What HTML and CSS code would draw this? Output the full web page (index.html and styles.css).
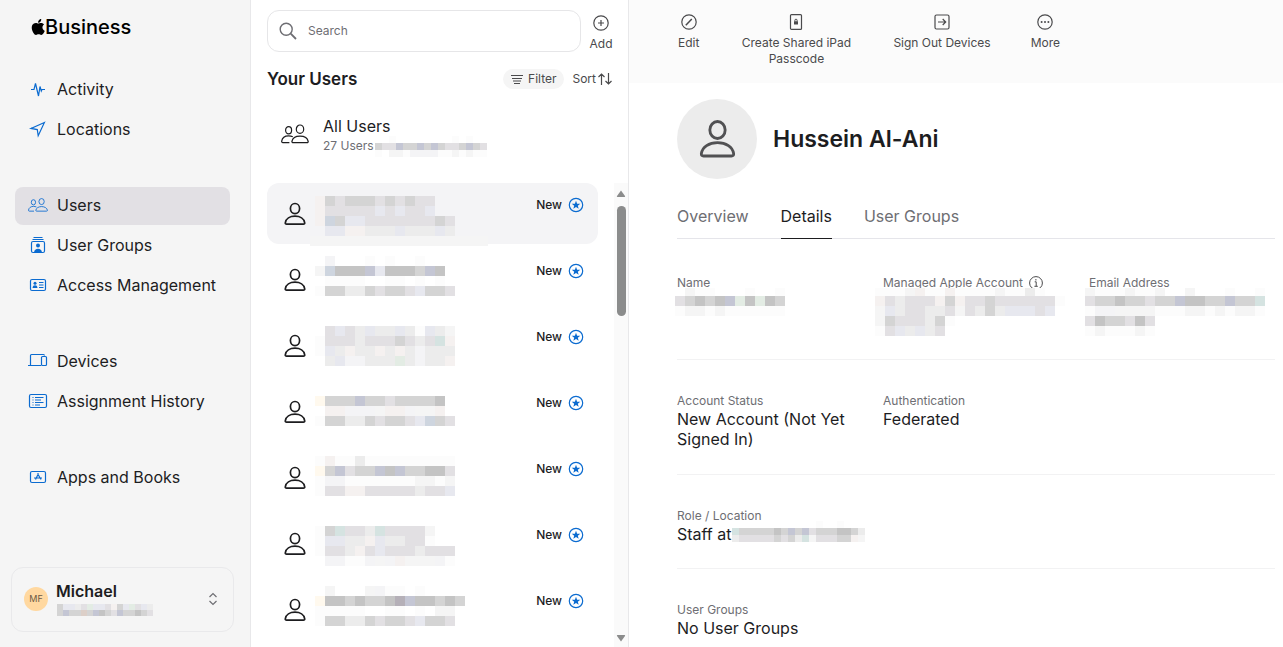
FILE: index.html
```html
<!DOCTYPE html>
<html lang="en">
<head>
<meta charset="utf-8">
<title>Business - Users</title>
<link rel="stylesheet" href="styles.css">
</head>
<body>
<svg class="defs" width="0" height="0" aria-hidden="true">
  <symbol id="person" viewBox="0 0 22 24">
    <ellipse cx="11" cy="6.6" rx="4.6" ry="5.1"/>
    <path d="M2.6 22.2h16.8c1 0 1.4-.6 1.3-1.4-.6-4-4.6-6.600-9.700-6.600s-9.100 2.600-9.700 6.600c-.1.800.3 1.400 1.300 1.400z"/>
  </symbol>
  <symbol id="people" viewBox="0 0 28 20">
    <ellipse cx="19" cy="5.200" rx="3.700" ry="4.200"/>
    <path d="M12.200 18.600h13.800c.9 0 1.300-.5 1.200-1.200-.6-3.200-4-5.200-8.200-5.200s-7.500 2-8.100 5.200c-.1.700.3 1.200 1.300 1.200z"/>
    <ellipse cx="7.600" cy="6.200" rx="3" ry="3.600"/>
    <path d="M11.800 12.800c-1.200-.6-2.600-.9-4.200-.9-3.500 0-6.400 2-6.900 5.300-.1.800.3 1.400 1.100 1.400h6.600"/>
  </symbol>
  <symbol id="star" viewBox="0 0 16 16">
    <circle cx="8" cy="8" r="6.700" fill="none" stroke="#0b6bd0" stroke-width="1.200"/>
    <path fill="#0b6bd0" stroke="none" d="M8 3.700l1.100 3h3.200L9.800 8.700l.9 3.100L8 10l-2.700 1.800.9-3.100-2.500-2h3.200z"/>
  </symbol>
</svg>

<aside class="sidebar">
  <div class="brand">
    <svg class="apple" viewBox="3 1 19 22" width="15" height="18" aria-hidden="true"><path d="M18.700 12.500c0-2.500 2-3.700 2.100-3.800-1.200-1.700-3-1.900-3.600-1.900-1.500-.2-3 .9-3.700.9-.8 0-2-.9-3.200-.9C8.600 6.800 7 7.800 6.100 9.300c-1.800 3.100-.5 7.700 1.300 10.200.9 1.200 1.900 2.600 3.200 2.600 1.300-.1 1.800-.8 3.300-.8s2 .8 3.300.8c1.400 0 2.300-1.200 3.100-2.500 1-1.400 1.400-2.800 1.400-2.900 0 0-3-1.100-3-4.200zM16.200 5.200c.7-.8 1.200-2 1-3.200-1 0-2.200.7-2.900 1.500-.6.700-1.200 1.900-1 3 1.100.1 2.200-.5 2.900-1.300z"/></svg>
    <span>Business</span>
  </div>
  <nav class="nav" aria-label="Main">
    <div class="nav-group">
      <a class="nav-item" href="#activity"><svg class="ni" viewBox="0 0 20 20"><path d="M3 10.500h3l1.500-6 3 12.500 1.500-9.500 1.300 4.500.7-1.500h3"/></svg>Activity</a>
      <a class="nav-item" href="#locations"><svg class="ni" viewBox="0 0 20 20"><path d="M16.400 3.500L3 9.400l6.300 1.200.9 6.200z"/></svg>Locations</a>
    </div>
    <div class="nav-group">
      <a class="nav-item current" href="#users" aria-current="page"><svg class="ni"><use href="#people"/></svg>Users</a>
      <a class="nav-item" href="#groups"><svg class="ni" viewBox="0 0 20 20"><path d="M5.500 2.500h9M4.500 4.500h11"/><rect x="3.500" y="6.500" width="13" height="11" rx="1.500"/><g class="solid"><circle cx="10" cy="10.500" r="2"/><path d="M6 17.500c.3-2.600 1.800-3.700 4-3.700s3.700 1.100 4 3.700z"/></g></svg>User Groups</a>
      <a class="nav-item" href="#access"><svg class="ni" viewBox="0 0 20 20"><rect x="2.500" y="4.500" width="15" height="11" rx="1.500"/><path d="M11 7.500h4.500M11 10h4.500M11 12.500h4.500" stroke-width="1"/><g class="solid"><circle cx="7" cy="8.300" r="1.500"/><path d="M4.500 13c.2-2 1.200-2.700 2.500-2.700s2.300.7 2.500 2.700z"/></g></svg>Access Management</a>
    </div>
    <div class="nav-group">
      <a class="nav-item" href="#devices"><svg class="ni" viewBox="0 0 20 20"><path d="M0 14.500h13M2.500 14.500v-10q0-1 1-1h12q1 0 1 1"/><rect x="13.500" y="5.500" width="5" height="9" rx="1"/></svg>Devices</a>
      <a class="nav-item" href="#history"><svg class="ni" viewBox="0 0 20 20"><rect x="1.500" y="3.500" width="17" height="13" rx="1.500"/><path d="M4.500 6.500h1M7 6.500h8.500M4.500 9h1M7 9h6M4.500 11.500h1M7 11.500h8.500M4.500 14h1M7 14h5" stroke-width="1"/></svg>Assignment History</a>
    </div>
    <div class="nav-group">
      <a class="nav-item" href="#apps"><svg class="ni" viewBox="0 0 20 20"><rect x="2.500" y="4.500" width="15" height="11" rx="1.500"/><path d="M9.500 6.500l3.500 6M10.500 6.500L7.500 12.500M6 11h8"/></svg>Apps and Books</a>
    </div>
  </nav>
  <button class="account" type="button">
    <span class="initials">MF</span>
    <span class="account-text">
      <strong>Michael</strong>
      <svg class="mosaic account-id" data-size="6" data-x="1" data-rows="ehhcdmhhdiehmdhc egeepegfedgeefed"></svg>
    </span>
    <svg class="updown" viewBox="0 0 10 14" width="10" height="14"><path d="M1.500 5L5 1.500 8.500 5M1.500 9L5 12.500 8.500 9"/></svg>
  </button>
</aside>

<section class="list-pane">
  <div class="search-row">
    <label class="search">
      <svg viewBox="0 0 18 18" width="18" height="18"><circle cx="7.200" cy="7.200" r="6"/><path d="M11.700 11.700l5.300 5.300" stroke-width="1.800"/></svg>
      <input type="search" placeholder="Search" aria-label="Search">
    </label>
    <button class="tool add" type="button"><svg viewBox="0 0 16 16"><circle cx="8" cy="8" r="7.200"/><path d="M8 5v6M5 8h6"/></svg>Add</button>
  </div>
  <div class="list-head">
    <h2>Your Users</h2>
    <button class="filter" type="button"><svg viewBox="0 0 12 10" width="12" height="10"><path d="M0 1.500h12M1 4.500h10M2 7h8M3 9.500h6" stroke-width="1"/></svg>Filter</button>
    <button class="sort" type="button">Sort<svg viewBox="0 0 14 12" width="14" height="12"><path d="M3.500 12V1M.5 4l3-3 3 3M10.500 0v11M7.500 8l3 3 3-3"/></svg></button>
  </div>
  <button class="all-users" type="button">
    <svg class="people" width="28" height="20"><use href="#people"/></svg>
    <span class="all-text"><span class="all-title">All Users</span>
      <span class="all-sub">27 Users <svg class="mosaic count-info" data-size="7" data-y="-7" data-rows="..a........a.a.. eddgeegegeddeged a.bbajjjjaababaa"></svg></span>
    </span>
  </button>
  <div class="scroll-area">
    <div class="users">
      <button class="user selected" type="button"><svg class="person"><use href="#person"/></svg><svg class="mosaic info" data-strip="yes" data-y="13" data-rows="iedeeedededd idddddhdhddh ikehhddddddded jhhiiccchccchc"></svg><span class="badge">New<svg><use href="#star"/></svg></span></button>
      <button class="user" type="button"><svg class="person"><use href="#person"/></svg><svg class="mosaic info" data-y="7" data-rows=".j...a.a..a bkfffghfffegf .aaaa..aa.a.a aeeccedeedheed"></svg><span class="badge">New<svg><use href="#star"/></svg></span></button>
      <button class="user" type="button"><svg class="person"><use href="#person"/></svg><svg class="mosaic info" data-y="11" data-rows=".dhdchcchcahcb adddcdddedcdli ahciccicicjccc .chjjcccmcjcci"></svg><span class="badge">New<svg><use href="#star"/></svg></span></button>
      <button class="user" type="button"><svg class="person"><use href="#person"/></svg><svg class="mosaic info" data-y="15" data-rows="neeegeedeeeef .iijjjbiijbbi aeeccedeedhked"></svg><span class="badge">New<svg><use href="#star"/></svg></span></button>
      <button class="user" type="button"><svg class="person"><use href="#person"/></svg><svg class="mosaic info" data-y="9" data-rows="aiaacaaaaaaaaa negdeegfgeeffd ajjaaaaaaabbab addiidddddcddh"></svg><span class="badge">New<svg><use href="#star"/></svg></span></button>
      <button class="user" type="button"><svg class="person"><use href="#person"/></svg><svg class="mosaic info" data-y="13" data-rows="aelddclddddb ahhccihccdda addcidhdddcddd .jjaajbjibbbja"></svg><span class="badge">New<svg><use href="#star"/></svg></span></button>
      <button class="user" type="button"><svg class="person"><use href="#person"/></svg><svg class="mosaic info" data-y="7" data-rows=".b...bjaa.a nffefeefogffefe aaaaa..aa.a.bb aeeccedeedheed"></svg><span class="badge">New<svg><use href="#star"/></svg></span></button>
    </div>
    <div class="scrollbar" aria-hidden="true">
      <svg viewBox="0 0 10 8" width="10" height="8"><path d="M5 0.500L9 6q.6 1-.6 1H1.600Q.4 7 1 6z"/></svg>
      <span class="thumb"></span>
      <svg viewBox="0 0 10 8" width="10" height="8"><path d="M5 7.500L9 2q.6-1-.6-1H1.600Q.4 1 1 2z"/></svg>
    </div>
  </div>
</section>

<main class="detail">
  <div class="toolbar">
    <button class="tool" type="button"><svg viewBox="0 0 16 16"><circle cx="8" cy="8" r="7.200"/><path d="M4.800 11.300l6-6.200" stroke-width="1.500"/></svg>Edit</button>
    <button class="tool wide" type="button"><svg viewBox="0 0 16 16"><rect x="2.500" y=".6" width="11" height="14.800" rx="1"/><path d="M6.900 7.500V6.300a1.100 1.100 0 0 1 2.200 0v1.200" stroke-width="1"/><rect class="lock" x="6" y="7.200" width="4" height="3.400" rx=".4"/></svg>Create Shared iPad Passcode</button>
    <button class="tool" type="button"><svg viewBox="0 0 16 16"><rect x="1" y="1" width="14" height="14" rx="1.500"/><path d="M4 8h7.500M8.700 5l3 3-3 3"/></svg>Sign Out Devices</button>
    <button class="tool" type="button"><svg viewBox="0 0 16 16"><circle cx="8" cy="8" r="7.200"/><g class="lock"><circle cx="4.600" cy="8" r="1"/><circle cx="8" cy="8" r="1"/><circle cx="11.400" cy="8" r="1"/></g></svg>More</button>
  </div>
  <div class="content">
    <header class="profile">
      <span class="avatar"><svg width="37" height="40"><use href="#person"/></svg></span>
      <h1>Hussein Al-Ani</h1>
    </header>
    <nav class="tabs" aria-label="User sections">
      <a href="#overview">Overview</a>
      <a class="active" href="#details" aria-current="page">Details</a>
      <a href="#user-groups">User Groups</a>
    </nav>
    <dl class="fields first">
      <div><dt>Name</dt><dd><svg class="mosaic" data-x="-2" data-rows=".baa...a..a defefgmfmfe abbabaaaaaa"></svg></dd></div>
      <div><dt>Managed Apple Account <svg class="info-icon" viewBox="0 0 14 14" width="14" height="14"><circle cx="7" cy="7" r="6.400"/><path d="M5.700 5.800h1.500v4.400M5.400 10.300h3.400M6.900 3v1.500"/></svg></dt><dd><svg class="mosaic" data-x="-8" data-rows="aaabiaaiaaaabaaca idcdddieiddedddddda bhcddccdbdcechhhdh bedddcea adhchcd"></svg></dd></div>
      <div><dt>Email Address</dt><dd><svg class="mosaic" data-x="-4" data-rows="baaabaab..b...a..a deefeedeegffeegeel ajjbbbbaaabbababba dfeedfd abaaaba"></svg></dd></div>
    </dl>
    <dl class="fields status">
      <div><dt>Account Status</dt><dd>New Account (Not Yet Signed In)</dd></div>
      <div><dt>Authentication</dt><dd>Federated</dd></div>
    </dl>
    <dl class="fields">
      <div><dt>Role / Location</dt><dd class="staff">Staff at<svg class="mosaic place" data-size="7" data-y="-3" data-rows="............a..a leeeeefegegdeeeffec cdddddedeclbdddeeib"></svg></dd></div>
    </dl>
    <dl class="fields">
      <div><dt>User Groups</dt><dd>No User Groups</dd></div>
    </dl>
  </div>
</main>
<script src="mosaic.js"></script>
</body>
</html>
```
FILE: styles.css
```css
* { box-sizing: border-box; }

body {
  margin: 0;
  display: flex;
  height: 100vh;
  overflow: hidden;
  background: #fff;
  color: #1d1d1f;
  font: 16px/20px Inter, "Liberation Sans", sans-serif;
}

button, input { font: inherit; color: inherit; }
button { border: 0; padding: 0; background: none; text-align: left; cursor: pointer; }
a { color: inherit; text-decoration: none; }
h1, h2, dl, dd { margin: 0; }
svg { fill: none; stroke: currentColor; stroke-width: 1.2; flex: none; }
.defs { position: absolute; }
.mosaic { display: block; width: 150px; height: 20px; overflow: visible; stroke: none; }

/* Sidebar */
.sidebar {
  display: flex;
  flex-direction: column;
  flex: none;
  width: 251px;
  padding: 15px;
  background: #f5f5f5;
  border-right: 1px solid #e8e8ea;
}
.brand {
  display: flex;
  align-items: center;
  padding-left: 15px;
  height: 24px;
  color: #000;
  font-size: 20px;
  font-weight: 500;
}
.apple { fill: currentColor; stroke: none; }
.nav { display: flex; flex-direction: column; gap: 38px; margin-top: 32px; flex: 1; }
.nav-group { display: flex; flex-direction: column; gap: 2px; }
.nav-item {
  display: flex;
  align-items: center;
  gap: 9px;
  width: 215px;
  height: 38px;
  padding: 0 0 2px 13px;
  border-radius: 8px;
}
.nav-item.current { background: #e2e0e4; }
.ni { width: 20px; height: 20px; color: #0b6bd0; stroke-width: 1.2; }
.solid { fill: currentColor; stroke: none; }
.account {
  display: flex;
  align-items: center;
  gap: 8px;
  height: 65px;
  margin: 0 1px 0 -4px;
  padding: 0 15px 2px 12px;
  border: 1px solid #e9e9eb;
  border-radius: 12px;
}
.initials {
  display: grid;
  place-items: center;
  width: 24px;
  height: 24px;
  border-radius: 50%;
  background: #ffd8a0;
  color: #6b5a45;
  font-size: 9px;
}
.account-text { flex: 1; }
.account-text strong { display: block; font-weight: 600; line-height: 20px; }
.account-id { width: 96px; height: 12px; margin-top: 3px; }
.updown { color: #6e6e73; }

/* User list */
.list-pane {
  display: flex;
  flex-direction: column;
  flex: none;
  width: 378px;
  padding: 10px 0 0 16px;
  border-right: 1px solid #e8e8ea;
}
.search-row { display: flex; gap: 8px; padding-right: 15px; }
.search {
  display: flex;
  align-items: center;
  flex: 1;
  gap: 11px;
  height: 42px;
  padding: 0 11px;
  border: 1px solid #e6e6e8;
  border-radius: 12px;
  color: #6e6e73;
}
.search svg { stroke-width: 1.4; }
.search input {
  flex: 1;
  min-width: 0;
  padding: 0;
  border: 0;
  outline: 0;
  background: none;
  font-size: 12px;
}
.search input::placeholder { color: #6e6e73; }
.tool {
  display: flex;
  flex-direction: column;
  align-items: center;
  gap: 5px;
  color: #4a4a4c;
  font-size: 12px;
  line-height: 16px;
  text-align: center;
}
.tool svg { width: 16px; height: 16px; }
.lock { fill: currentColor; stroke: none; }
.add { width: 24px; padding-top: 5px; }
.list-head { display: flex; align-items: center; gap: 8px; height: 20px; margin-top: 17px; padding-right: 16px; }
.list-head h2 { flex: 1; font-size: 17px; font-weight: 600; }
.filter, .sort { display: flex; align-items: center; height: 20px; color: #4a4a4c; font-size: 12px; }
.filter { gap: 5px; padding: 0 8px; border-radius: 10px; background: #f5f5f5; }
.sort { gap: 2px; }
.all-users { display: flex; align-items: center; gap: 14px; height: 94px; padding-left: 14px; }
.people { margin-bottom: 4px; }
.all-text { display: flex; flex-direction: column; }
.all-sub { display: flex; align-items: center; gap: 1px; color: #6e6e73; font-size: 12px; }
.count-info { width: 112px; height: 7px; }
.scroll-area { display: flex; justify-content: space-between; flex: 1; min-height: 0; overflow: hidden; }
.users { display: flex; flex-direction: column; gap: 5px; width: 331px; }
.user {
  display: flex;
  flex: none;
  width: 100%;
  height: 61px;
  padding: 0 14px 0 17px;
  border-radius: 12px;
}
.user.selected { background: #f4f4f6; }
.person { width: 22px; height: 24px; margin-top: 19px; stroke-width: 1.7; }
.info { height: 61px; margin-left: 9px; }
.badge {
  display: flex;
  align-items: center;
  gap: 6px;
  height: 20px;
  margin: 12px 0 0 auto;
  font-size: 12px;
  font-weight: 500;
}
.badge svg { width: 16px; height: 16px; }
.scrollbar {
  display: flex;
  flex-direction: column;
  align-items: center;
  gap: 8px;
  width: 14px;
  padding: 7px 0 5px;
  background: #fafafa;
  color: #8b8c8c;
}
.scrollbar svg { fill: currentColor; stroke: none; }
.scrollbar svg:last-child { margin-top: auto; }
.thumb { width: 9px; height: 110px; border-radius: 5px; background: currentColor; }

/* Detail */
.detail { flex: 1; min-width: 0; }
.toolbar { display: flex; align-items: flex-start; gap: 40px; height: 83px; padding: 14px 0 0 49px; background: #fbfbfb; }
.wide { width: 114px; }
.content { padding: 16px 8px 0 48px; }
.profile { display: flex; align-items: center; gap: 16px; }
.profile h1 { font-size: 23px; font-weight: 600; line-height: 30px; }
.avatar { display: grid; place-items: center; width: 80px; height: 80px; border-radius: 50%; background: #ececec; color: #515153; }
.avatar svg { stroke-width: 1.7; }
.tabs { display: flex; gap: 32px; margin-top: 27px; border-bottom: 1px solid #e5e5ea; color: #6e6e73; }
.tabs a { margin-bottom: -1px; padding-bottom: 13px; }
.tabs .active { border-bottom: 1px solid #1d1d1f; padding-bottom: 12px; color: #1d1d1f; }
.fields {
  display: grid;
  grid-template-columns: repeat(3, 1fr);
  gap: 20px;
  padding: 33px 0 24px;
  border-bottom: 1px solid #f2f2f3;
}
.fields.first { padding-top: 36px; }
.fields.first dd { display: flex; height: 44px; }
.fields.first .mosaic { height: 50px; margin-top: -5px; clip-path: inset(2px -60px 0 -10px); }
.fields.status { padding-bottom: 25px; }
.fields:last-child { border: 0; }
dt { display: flex; align-items: center; gap: 6px; height: 16px; color: #6e6e73; font-size: 12px; line-height: 16px; white-space: nowrap; }
.info-icon { color: #4a4a4c; stroke-width: 1; }
.staff { display: flex; white-space: nowrap; }
```
FILE: mosaic.js
```javascript
// Draws redacted text as a grid of tiles. Each letter is one tile colour, a dot is an empty tile.
const tones = {
  a: "#fcfcfc", b: "#f5f5f5", c: "#ececec", d: "#e2e0e3", e: "#d4d4d4",
  f: "#c4c4c4", g: "#c4c6d4", h: "#e7e8ef", i: "#f5f1f0", j: "#f4f4f6",
  k: "#ced5df", l: "#d5e3e1", m: "#e3ece4", n: "#fff9ee", o: "#b5b0b8", p: "#dccfc8"
};

function tile(svg, x, y, width, height, fill) {
  const rect = document.createElementNS("http://www.w3.org/2000/svg", "rect");
  Object.entries({ x, y, width, height, fill }).forEach(([key, value]) => rect.setAttribute(key, value));
  svg.append(rect);
}

document.querySelectorAll(".mosaic").forEach((svg) => {
  const size = Number(svg.dataset.size || 10);
  const left = Number(svg.dataset.x || 0);
  const top = Number(svg.dataset.y || 0);
  svg.dataset.rows.split(" ").forEach((row, r) => {
    [...row].forEach((tone, c) => {
      if (tone !== ".") tile(svg, left + c * size, top + r * size, size, size, tones[tone]);
    });
  });
  if (svg.dataset.strip) tile(svg, -5, 53, 178, 10, "#f5f5f5");
});
```
